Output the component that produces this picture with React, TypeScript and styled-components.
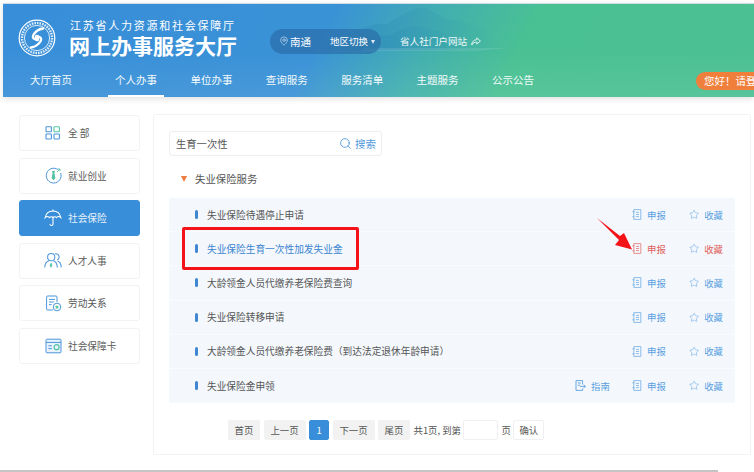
import React from 'react';
import styled, { createGlobalStyle } from 'styled-components';
import { Search, Star, MapPin } from 'lucide-react';

const GlobalStyle = createGlobalStyle`
  html, body {
    margin: 0;
    padding: 0;
    background: #fff;
  }
  body {
    font-family: "Noto Sans CJK SC", "Liberation Sans", sans-serif;
    overflow: hidden;
  }
  * { box-sizing: border-box; }
`;

const Page = styled.div`
  position: relative;
  width: 754px;
  height: 472px;
  overflow: hidden;
  background: #fff;
`;

const Header = styled.header`
  position: relative;
  height: 94px;
  margin: 3px 0 0 3px;
  border-top: 1px solid #cfdbe6;
  background: linear-gradient(to bottom, transparent 50%, rgba(255, 255, 255, 0.07)),
    linear-gradient(118deg, #388ed9 0%, #3a92d6 42%, #42b0ae 56%, #4ac193 68%, #4bc093 100%);
  box-shadow: 0 2px 6px rgba(0, 0, 0, 0.12);
  overflow: hidden;
`;

const Mountains = styled.svg`
  position: absolute;
  left: 300px;
  top: 0;
`;

const TopRow = styled.div`
  position: relative;
  display: flex;
  align-items: center;
  height: 63px;
  padding: 4px 0 0 15px;
`;

const Brand = styled.div`
  display: flex;
  flex-direction: column;
  width: 167px;
  margin-left: 13px;
  color: #fff;
`;

const Org = styled.div`
  font-size: 11px;
  line-height: 15px;
  letter-spacing: 1.75px;
  white-space: nowrap;
  padding-left: 1px;
`;

const HallName = styled.div`
  font-size: 21px;
  font-weight: 700;
  line-height: 25px;
  white-space: nowrap;
`;

const CityPill = styled.div`
  display: flex;
  align-items: center;
  width: 111px;
  height: 25px;
  margin: 7px 0 0 34px;
  padding-left: 9px;
  border-radius: 13px;
  background: rgba(40, 105, 165, 0.62);
  color: #fff;
`;

const CityName = styled.span`
  margin-left: 1px;
  font-size: 10.5px;
  white-space: nowrap;
`;

const CitySwitch = styled.span`
  margin-left: 19px;
  font-size: 9.5px;
  white-space: nowrap;
  &::after {
    content: '';
    display: inline-block;
    margin-left: 3px;
    vertical-align: 1px;
    border-left: 2.5px solid transparent;
    border-right: 2.5px solid transparent;
    border-top: 4px solid #dce9f5;
  }
`;

const PortalLink = styled.a`
  display: flex;
  align-items: center;
  gap: 4px;
  margin: 7px 0 0 19px;
  color: #eef7f5;
  font-size: 9.6px;
  white-space: nowrap;
`;

const Nav = styled.nav`
  position: relative;
  display: flex;
  height: 30px;
  padding-left: 20px;
`;

const NavItem = styled.a<{ $active?: boolean }>`
  width: 56px;
  margin-right: 19.4px;
  line-height: 26px;
  height: 30px;
  text-align: center;
  color: #f4fbfb;
  font-size: 10.5px;
  white-space: nowrap;
  border-bottom: 2px solid ${(p) => (p.$active ? '#fff' : 'transparent')};
  &:first-child {
    margin-right: 29px;
  }
`;

const Login = styled.div`
  position: absolute;
  top: 68px;
  left: 693px;
  width: 80px;
  height: 18px;
  padding-left: 8px;
  border-radius: 9px;
  background: #f07f3c;
  color: #fff;
  font-size: 10.5px;
  line-height: 18px;
  white-space: nowrap;
`;

const Content = styled.main`
  display: flex;
  align-items: flex-start;
  gap: 13px;
  padding: 17px 3px 0 19px;
`;

const Sidebar = styled.aside`
  display: flex;
  flex-direction: column;
  gap: 6.5px;
  width: 121px;
  margin-top: 1px;
`;

const SideItem = styled.a<{ $active?: boolean }>`
  display: flex;
  align-items: center;
  height: 36px;
  padding-left: 24px;
  border: 1px solid ${(p) => (p.$active ? '#388ed9' : '#f1f3f5')};
  border-radius: 3px;
  background: ${(p) => (p.$active ? '#388ed9' : '#fff')};
  color: ${(p) => (p.$active ? '#e8f2fb' : '#5a5a5a')};
  font-size: 9.7px;
`;

const SideIcon = styled.span`
  display: flex;
  justify-content: center;
  width: 18px;
  margin-right: 6px;
`;

const Panel = styled.section`
  flex: 1;
  height: 341px;
  padding: 16px 15px 0 15px;
  border: 1px solid #f1f3f5;
  border-radius: 2px;
`;

const SearchBox = styled.div`
  display: flex;
  align-items: center;
  width: 213px;
  height: 25px;
  padding: 0 5px 0 6px;
  border: 1px solid #eceef0;
  border-radius: 3px;
  color: #555;
  font-size: 10.3px;
`;

const SearchText = styled.span`
  flex: 1;
`;

const SearchButton = styled.span`
  display: flex;
  align-items: center;
  gap: 3px;
  color: #4f98dc;
  font-size: 10.5px;
`;

const GroupTitle = styled.div`
  display: flex;
  align-items: center;
  height: 42px;
  padding: 3px 0 0 12px;
  color: #555;
  font-size: 10.4px;
  &::before {
    content: '';
    margin-right: 8px;
    border-left: 3.5px solid transparent;
    border-right: 3.5px solid transparent;
    border-top: 6px solid #ee7c3f;
  }
`;

const List = styled.ul`
  position: relative;
  margin: 0;
  padding: 0;
  list-style: none;
  background: #f4f8fd;
`;

const Row = styled.li`
  display: flex;
  align-items: center;
  height: 34.2px;
  padding: 0 12px 0 26px;
  color: #555;
  font-size: 9.7px;
  border-bottom: 1px solid #f9fbfe;
  &:last-child {
    border-bottom: none;
  }
  &::before {
    content: '';
    width: 3px;
    height: 9px;
    margin-right: 9px;
    border-radius: 2px;
    background: #3f87d2;
  }
`;

const RowName = styled.span<{ $current?: boolean }>`
  flex: 1;
  white-space: nowrap;
  color: ${(p) => (p.$current ? '#3a84cf' : '#555')};
`;

const RowAction = styled.a<{ $color?: string; $width: number }>`
  display: flex;
  align-items: center;
  gap: 5px;
  width: ${(p) => p.$width}px;
  color: ${(p) => p.$color ?? '#5a9fe0'};
  font-size: 9.4px;
  white-space: nowrap;
`;

const Highlight = styled.div`
  position: absolute;
  left: 13px;
  top: 29px;
  width: 177px;
  height: 43px;
  border: 3px solid #f5131a;
  border-radius: 2px;
`;

const Arrow = styled.svg`
  position: absolute;
  left: 426px;
  top: 18px;
`;

const Pager = styled.div`
  display: flex;
  align-items: center;
  height: 20px;
  margin: 17px 0 0 59px;
  color: #555;
  font-size: 9.4px;
  white-space: nowrap;
`;

const PageButton = styled.a<{ $width: number; $current?: boolean }>`
  width: ${(p) => p.$width}px;
  height: 20px;
  margin-right: 3.5px;
  line-height: 19px;
  text-align: center;
  border: 1px solid ${(p) => (p.$current ? '#388ed9' : '#f2f2f2')};
  border-radius: 2px;
  background: ${(p) => (p.$current ? '#388ed9' : '#f2f2f2')};
  color: ${(p) => (p.$current ? '#fff' : '#555')};
`;

const PageInput = styled.span`
  width: 35px;
  height: 20px;
  margin: 0 3px 0 2.5px;
  border: 1px solid #f0f0f0;
  border-radius: 2px;
`;

const ConfirmButton = styled.a`
  width: 31px;
  height: 20px;
  margin-left: 2.5px;
  line-height: 18px;
  text-align: center;
  border: 1px solid #f0f0f0;
  border-radius: 2px;
`;

const BottomBar = styled.div`
  width: 718px;
  height: 3px;
  margin-top: 15px;
  background: #c4c4c4;
`;

const Logo = () => (
  <svg width="38" height="38" viewBox="0 0 38 38" fill="none">
    <circle cx="19" cy="19" r="17.8" stroke="#fff" strokeWidth="1.2" />
    <circle cx="19" cy="19" r="15" stroke="#dcecf8" strokeWidth="2.4" strokeDasharray="1.6 1" />
    <circle cx="19" cy="19" r="12.6" fill="#3a90d8" stroke="#fff" strokeWidth="0.8" />
    <path
      d="M25 9.500c-3.600.6-7.500 2.800-9.400 6-1.400 2.400-.6 4.300 1.500 4.600 2.200.3 3.700-1 3.200-2.400-.4-1-1.700-1-2.300-.3"
      stroke="#fff"
      strokeWidth="2.4"
      strokeLinecap="round"
    />
    <path
      d="M13 28.500c3.600-.6 7.500-2.800 9.400-6 1.400-2.400.6-4.300-1.500-4.600-2.200-.3-3.700 1-3.200 2.400.4 1 1.700 1 2.300.3"
      stroke="#fff"
      strokeWidth="2.4"
      strokeLinecap="round"
    />
  </svg>
);

const MountainArt = () => (
  <Mountains width="220" height="63" viewBox="0 0 220 63">
    <defs>
      <linearGradient id="fade" x1="0" x2="1" y1="0" y2="0">
        <stop offset="0" stopColor="#2f8cc0" stopOpacity="0" />
        <stop offset="0.35" stopColor="#2f8cb8" stopOpacity="0.4" />
        <stop offset="0.7" stopColor="#359cb0" stopOpacity="0.3" />
        <stop offset="1" stopColor="#40b0a8" stopOpacity="0" />
      </linearGradient>
    </defs>
    <path
      d="M0 46 C18 30 34 34 50 28 C62 22 74 18 84 20 C96 12 112 2 122 4 C134 8 140 16 152 16 C164 18 172 22 184 26 L204 46 Z"
      fill="url(#fade)"
    />
    <path
      d="M34 46 C52 36 70 30 86 32 C100 22 118 20 130 26 C146 30 160 34 176 46 Z"
      fill="url(#fade)"
    />
    <path d="M60 44 L205 44 L175 47 L60 47 Z" fill="#ffffff" opacity="0.1" />
  </Mountains>
);

const GridIcon = () => (
  <svg width="16" height="14" viewBox="0 0 16 14" fill="none" strokeWidth="1.1">
    <rect x="1" y="0.8" width="5.4" height="5" rx="0.8" stroke="#4b95dc" />
    <rect x="9" y="0.8" width="5.4" height="5" rx="0.8" stroke="#54c6a5" />
    <rect x="1" y="8" width="5.4" height="5" rx="0.8" stroke="#4b95dc" />
    <rect x="9" y="8" width="5.4" height="5" rx="0.8" stroke="#4b95dc" />
  </svg>
);

const JobIcon = () => (
  <svg width="17" height="17" viewBox="0 0 17 17" fill="none">
    <path d="M13 2.600A7.400 7.400 0 1 0 15.600 6" stroke="#4b95dc" strokeWidth="1" />
    <path d="M7 4h3l-.6 2 1 5.200-1.900 2-1.900-2 1-5.200z" fill="#53c2a6" />
    <path d="M12 5l3-3M13 2h2v2" stroke="#53c2a6" strokeWidth="0.9" />
  </svg>
);

const UmbrellaIcon = () => (
  <svg width="18" height="18" viewBox="0 0 18 18" fill="none" stroke="#fff" strokeWidth="1.1">
    <path d="M1.200 8.600C2 4.400 5 2 9 2s7 2.400 7.800 6.600c-1.300-1.300-3-1.300-4.300 0-1-1.200-2.500-1.200-3.500 0-1-1.200-2.500-1.200-3.500 0-1.300-1.300-3-1.300-4.300 0z" />
    <path d="M9 .8V2M9 8v7c0 2-2.800 2-3 .2" strokeLinecap="round" />
  </svg>
);

const PeopleIcon = () => (
  <svg width="19" height="17" viewBox="0 0 19 17" fill="none" stroke="#4b95dc" strokeWidth="1.1">
    <circle cx="7.600" cy="5" r="3.800" />
    <path d="M11.600 1.400c2.400-.6 4.400 1.200 4.400 3.400 0 1.500-.8 2.600-2 3.200" />
    <path d="M.8 16c0-3.800 2-6.400 4.600-7.200M9.800 8.800c2.600.8 4.200 3.400 4.200 7.200" />
    <path d="M14.400 9c2.200.8 3.600 3.200 3.800 6.600" />
    <path d="M7.400 11.500v4" stroke="#53c2a6" strokeWidth="1.6" />
    <path d="M6 13.400h2.800" stroke="#53c2a6" strokeWidth="1.2" />
  </svg>
);

const ContractIcon = () => (
  <svg width="17" height="17" viewBox="0 0 17 17" fill="none" stroke="#4b95dc" strokeWidth="1">
    <path d="M8 15H2.600a1 1 0 0 1-1-1V2a1 1 0 0 1 1-1H11a1 1 0 0 1 1 1v5" />
    <path d="M4 4.400h6M4 7h5M4 9.600h2.600" />
    <circle cx="12" cy="12" r="3.800" />
    <path d="M12 9.900l.7 1.400 1.500.2-1.100 1 .3 1.500-1.400-.7-1.400.7.3-1.500-1.100-1 1.500-.2z" fill="#53c2a6" stroke="none" />
  </svg>
);

const CardIcon = () => (
  <svg width="17" height="16" viewBox="0 0 17 16" fill="none" stroke="#4b95dc" strokeWidth="1">
    <rect x="1" y="1.200" width="15" height="13.600" rx="1" fill="#eaf3fb" />
    <path d="M1 4.400h15" />
    <path d="M3.400 7.800h3.400M3.400 10.600h3.400" />
    <circle cx="11.600" cy="9.200" r="2.500" stroke="#53c2a6" strokeWidth="1.200" />
  </svg>
);

const DocIcon = ({ color }: { color: string }) => (
  <svg width="10" height="11" viewBox="0 0 10 11" fill="none" stroke={color} strokeWidth="0.8" opacity="0.85">
    <path d="M1.800 .6h7v9.800h-7zM.4 2.800h2.200M.4 7.800h2.200M4 3.400h3M4 5.500h3M4 7.600h3" />
  </svg>
);

const GuideIcon = () => (
  <svg width="11" height="11" viewBox="0 0 11 11" fill="none" stroke="#5a9fe0" strokeWidth="0.9">
    <path d="M7.600 4.400V.6H1v9.800h6.600V8.400M2.800 3h3M2.800 5.200h2.400M5 6.400h5.400M8.600 4.800l1.800 1.600-1.800 1.600" />
  </svg>
);

const ShareIcon = () => (
  <svg width="10" height="9" viewBox="0 0 10 9" fill="none" stroke="#eef7f5" strokeWidth="0.9">
    <path d="M5.800.8 9.400 4 5.800 7V5.200C3.600 5 2 5.800.7 8c.2-3.200 1.800-5 5.100-5.400z" />
  </svg>
);

const navItems = ['大厅首页', '个人办事', '单位办事', '查询服务', '服务清单', '主题服务', '公示公告'];

const sideItems = [
  { label: '全 部', icon: <GridIcon /> },
  { label: '就业创业', icon: <JobIcon /> },
  { label: '社会保险', icon: <UmbrellaIcon />, active: true },
  { label: '人才人事', icon: <PeopleIcon /> },
  { label: '劳动关系', icon: <ContractIcon /> },
  { label: '社会保障卡', icon: <CardIcon /> },
];

const rows = [
  { name: '失业保险待遇停止申请' },
  { name: '失业保险生育一次性加发失业金', current: true },
  { name: '大龄领金人员代缴养老保险费查询' },
  { name: '失业保险转移申请' },
  { name: '大龄领金人员代缴养老保险费（到达法定退休年龄申请）' },
  { name: '失业保险金申领', guide: true },
];

const App: React.FC = () => (
  <Page>
    <GlobalStyle />
    <Header>
      <MountainArt />
      <TopRow>
        <Logo />
        <Brand>
          <Org>江苏省人力资源和社会保障厅</Org>
          <HallName>网上办事服务大厅</HallName>
        </Brand>
        <CityPill>
          <MapPin size={10} color="#cfe3f5" strokeWidth={1.5} />
          <CityName>南通</CityName>
          <CitySwitch>地区切换</CitySwitch>
        </CityPill>
        <PortalLink>
          省人社门户网站
          <ShareIcon />
        </PortalLink>
      </TopRow>
      <Nav>
        {navItems.map((item) => (
          <NavItem key={item} $active={item === '个人办事'}>
            {item}
          </NavItem>
        ))}
      </Nav>
      <Login>您好！请登录</Login>
    </Header>
    <Content>
      <Sidebar>
        {sideItems.map((item) => (
          <SideItem key={item.label} $active={item.active}>
            <SideIcon>{item.icon}</SideIcon>
            {item.label}
          </SideItem>
        ))}
      </Sidebar>
      <Panel>
        <SearchBox>
          <SearchText>生育一次性</SearchText>
          <SearchButton>
            <Search size={13} strokeWidth={1.6} />
            搜索
          </SearchButton>
        </SearchBox>
        <GroupTitle>失业保险服务</GroupTitle>
        <List>
          {rows.map((row) => (
            <Row key={row.name}>
              <RowName $current={row.current}>{row.name}</RowName>
              {row.guide && (
                <RowAction $width={57}>
                  <GuideIcon />
                  指南
                </RowAction>
              )}
              <RowAction $width={57} $color={row.current ? '#e0605a' : undefined}>
                <DocIcon color={row.current ? '#e0605a' : '#5a9fe0'} />
                申报
              </RowAction>
              <RowAction $width={34} $color={row.current ? '#e0605a' : undefined}>
                <Star size={11} color="#5a9fe0" strokeWidth={1.2} />
                收藏
              </RowAction>
            </Row>
          ))}
          <Highlight />
          <Arrow width="40" height="36" viewBox="0 0 40 36">
            <path d="M2 2 L25 20 L29 17 L37 33.500 L20 29 L24 24 Z" fill="#f5131a" />
          </Arrow>
        </List>
        <Pager>
          <PageButton $width={32}>首页</PageButton>
          <PageButton $width={42}>上一页</PageButton>
          <PageButton $width={20} $current>
            1
          </PageButton>
          <PageButton $width={42}>下一页</PageButton>
          <PageButton $width={32}>尾页</PageButton>
          共1页, 到第
          <PageInput />页
          <ConfirmButton>确认</ConfirmButton>
        </Pager>
      </Panel>
    </Content>
    <BottomBar />
  </Page>
);

export default App;
